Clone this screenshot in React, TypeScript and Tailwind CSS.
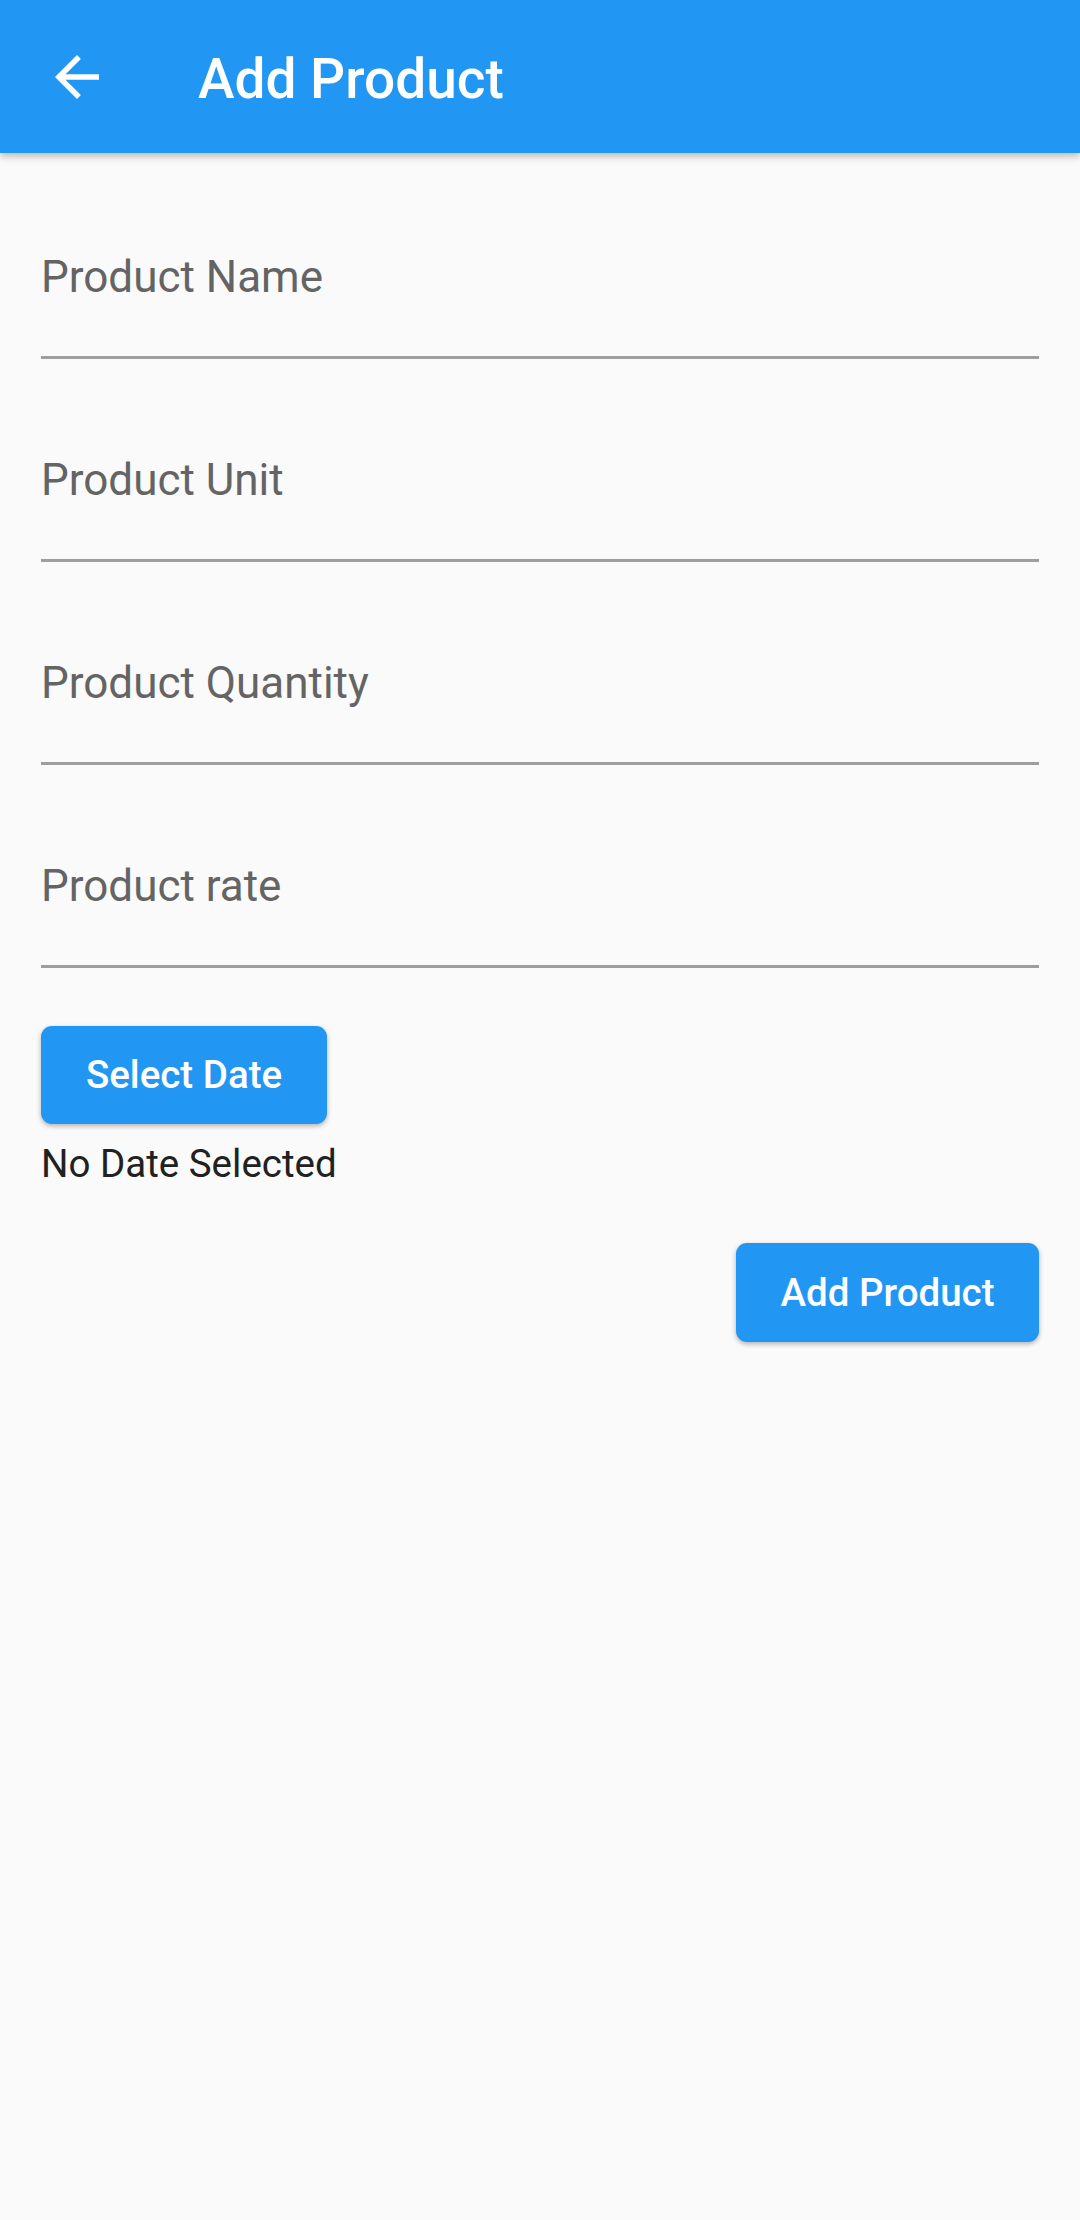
import React, { useState } from 'react';

const fields = ['Product Name', 'Product Unit', 'Product Quantity', 'Product rate'];

const BackArrow: React.FC = () => (
  <svg viewBox="0 0 24 24" className="w-[66px] h-[66px]" fill="#ffffff">
    <path d="M20 11H7.83l5.59-5.59L12 4l-8 8 8 8 1.41-1.41L7.83 13H20v-2z" />
  </svg>
);

const App: React.FC = () => {
  const [date] = useState<string | null>(null);

  return (
    <div
      className="w-[1080px] min-h-[2220px] bg-[#fafafa] flex flex-col"
      style={{ fontFamily: 'Roboto, "Noto Sans", sans-serif' }}
    >
      <header className="h-[153px] bg-[#2196f3] flex items-center shadow-[0_3px_8px_rgba(0,0,0,0.28)] relative z-10">
        <div className="w-[154px] h-full flex items-center justify-center">
          <BackArrow />
        </div>
        <h1 className="ml-[44px] pt-[5px] text-[55px] font-medium text-white leading-none">Add Product</h1>
      </header>

      <main className="flex flex-col px-[41px] pt-[4px]">
        {fields.map((label) => (
          <div key={label} className="h-[203px] flex flex-col">
            <span className="mt-[94px] text-[44px] leading-[52px] text-[#646464]">{label}</span>
            <div className="mt-auto mb-[1px] h-[2.75px] bg-[#9e9e9e]" />
          </div>
        ))}

        <button className="mt-[57px] w-[286px] h-[98px] rounded-[11px] bg-[#2196f3] text-white text-[38.5px] font-medium shadow-[0_2px_5px_rgba(0,0,0,0.3)] flex items-center justify-center">
          Select Date
        </button>
        <p className="mt-[17px] text-[38.5px] leading-[45px] text-[#212121]">
          {date ?? 'No Date Selected'}
        </p>

        <div className="flex justify-end mt-[57px]">
          <button className="w-[303px] h-[99px] rounded-[11px] bg-[#2196f3] text-white text-[38.5px] font-medium shadow-[0_2px_5px_rgba(0,0,0,0.3)] flex items-center justify-center">
            Add Product
          </button>
        </div>
      </main>
    </div>
  );
};

export default App;
